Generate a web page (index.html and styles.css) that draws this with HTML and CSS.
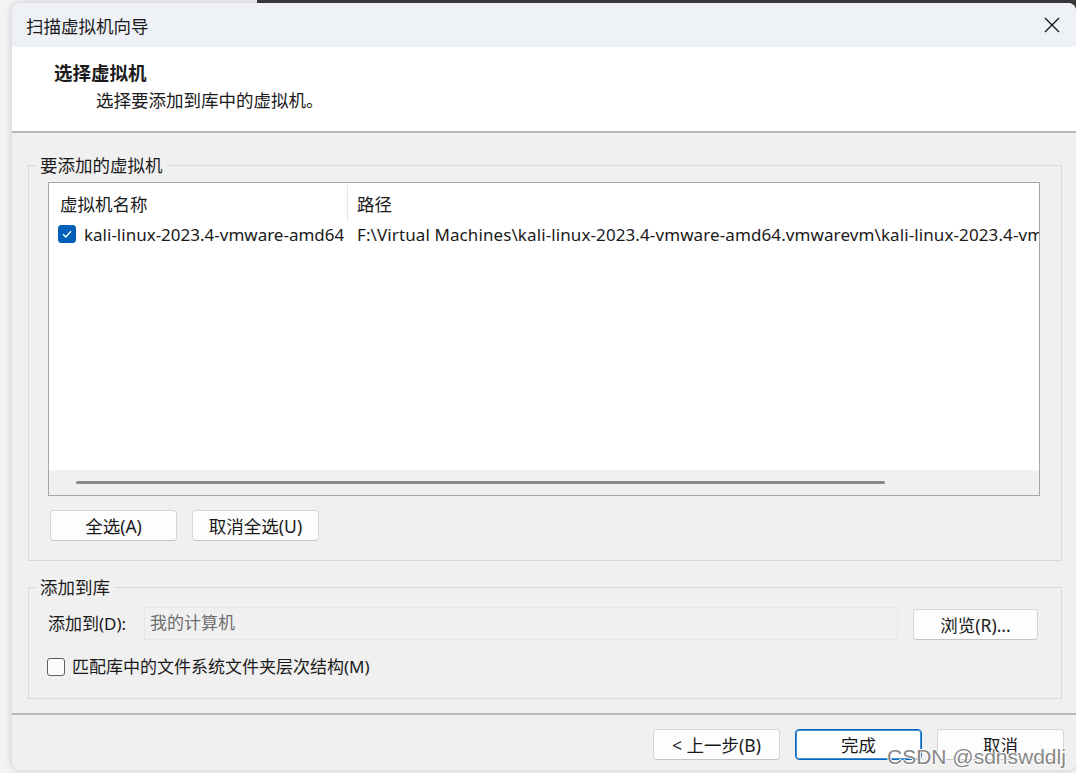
FILE: index.html
```html
<!DOCTYPE html>
<html lang="zh-CN">

<head>
    <meta charset="UTF-8">
    <meta name="viewport" content="width=device-width, initial-scale=1.0">
    <title>扫描虚拟机向导</title>
    <link rel="stylesheet" href="styles.css">
</head>

<body>

    <!-- window edge peeking out behind the dialog -->
    <div class="backdrop"></div>

    <div class="dialog">
        <div class="titlebar">
            <span class="title">扫描虚拟机向导</span>
            <span class="close">
                <svg width="16" height="16" viewBox="0 0 16 16">
                    <path d="M1 1 L15 15 M15 1 L1 15" stroke="#1a1a1a" stroke-width="1.4" fill="none"/>
                </svg>
            </span>
        </div>

        <div class="header">
            <div class="header-title">选择虚拟机</div>
            <div class="header-sub">选择要添加到库中的虚拟机。</div>
        </div>

        <div class="content">
            <fieldset class="group group-vms">
                <legend>要添加的虚拟机</legend>

                <div class="list">
                    <div class="list-head">
                        <div class="col col-name">虚拟机名称</div>
                        <div class="col col-path">路径</div>
                    </div>
                    <div class="list-row">
                        <div class="col col-name">
                            <span class="check checked">
                                <svg width="12" height="12" viewBox="0 0 12 12">
                                    <path d="M2 6.3 L4.8 9 L10 3.2" stroke="#fff" stroke-width="1.4" fill="none"/>
                                </svg>
                            </span>
                            kali-linux-2023.4-vmware-amd64
                        </div>
                        <div class="col col-path">F:\Virtual Machines\kali-linux-2023.4-vmware-amd64.vmwarevm\kali-linux-2023.4-vmware-amd64.vmx</div>
                    </div>
                    <div class="list-fill"></div>
                    <div class="hscroll">
                        <div class="hscroll-thumb"></div>
                    </div>
                </div>

                <div class="btn-row">
                    <button class="btn">全选(A)</button>
                    <button class="btn">取消全选(U)</button>
                </div>
            </fieldset>

            <fieldset class="group group-lib">
                <legend>添加到库</legend>

                <div class="field-row">
                    <label class="field-label">添加到(D):</label>
                    <div class="field-input">我的计算机</div>
                    <button class="btn btn-browse">浏览(R)...</button>
                </div>

                <div class="check-row">
                    <span class="check"></span>
                    匹配库中的文件系统文件夹层次结构(M)
                </div>
            </fieldset>
        </div>

        <div class="footer">
            <button class="btn">&lt; 上一步(B)</button>
            <button class="btn btn-default">完成</button>
            <button class="btn">取消</button>
        </div>
    </div>

    <div class="watermark">CSDN @sdnswddlj</div>

</body>

</html>
```

FILE: styles.css
```css
* {
    margin: 0;
    padding: 0;
    box-sizing: border-box;
}

body {
    font-family: "Noto Sans", "Noto Sans CJK SC", sans-serif;
    font-size: 17px;
    color: #1a1a1a;
    background-color: #f4f4f4;
    width: 1076px;
    height: 773px;
    overflow: hidden;
    position: relative;
}

.backdrop {
    position: absolute;
    top: 0;
    left: 257px;
    right: 0;
    height: 12px;
    background-color: #3c3c3c;
}

.dialog {
    position: relative;
    margin: 3px 0 0 12px;
    width: 1064px;
    height: 767px;
    background-color: #f0f0f0;
    border-radius: 8px;
    overflow: hidden;
    box-shadow: 0 0 10px rgba(0, 0, 0, 0.18);
    display: flex;
    flex-direction: column;
}

/* Title bar */
.titlebar {
    height: 44px;
    background-color: #eef2f7;
    display: flex;
    align-items: center;
    justify-content: space-between;
    padding: 0 14px 0 14px;
}

.title {
    font-size: 17.5px;
}

.close {
    display: flex;
    margin-right: 2px;
}

/* White wizard header */
.header {
    height: 86px;
    background-color: #fff;
    border-bottom: 2px solid #b9b9b9;
    padding: 13px 0 0 42px;
}

.header-title {
    font-size: 18.5px;
    font-weight: bold;
    line-height: 26px;
}

.header-sub {
    font-size: 17.5px;
    line-height: 28px;
    padding-left: 42px;
}

.content {
    flex: 1;
    padding: 21px 14px 0 16px;
}

/* Group boxes */
.group {
    min-width: 0;
    border: 1px solid #dadada;
    padding: 6px 21px 19px 19px;
}

.group legend {
    margin-left: -12px;
    padding: 0 4px;
    line-height: 22px;
    font-size: 17.5px;
}

.group-lib {
    margin-top: 15px;
    padding: 9px 23px 21px 18px;
}

.group-lib legend {
    margin-left: -11px;
}

/* VM list */
.list {
    height: 314px;
    background-color: #fff;
    border: 1px solid #a6a6a6;
    display: flex;
    flex-direction: column;
    overflow: hidden;
    white-space: nowrap;
}

.list-head,
.list-row {
    display: flex;
}

.list-head {
    height: 40px;
    align-items: center;
}

.list-head .col {
    font-size: 17.5px;
}

.col-name {
    width: 299px;
    flex-shrink: 0;
    padding-left: 11px;
    display: flex;
    align-items: center;
}

.list-head .col-name {
    height: 36px;
    border-right: 1px solid #e5e5e5;
}

.col-path {
    padding-left: 9px;
}

.list-row .col-path {
    letter-spacing: 0.1px;
}

.list-row {
    height: 22px;
    align-items: center;
}

.list-row .col-name {
    padding-left: 9px;
}

.list-fill {
    flex: 1;
}

.hscroll {
    height: 25px;
    background-color: #f0f0f0;
    padding: 11px 0 0 27px;
}

.hscroll-thumb {
    width: 809px;
    height: 3px;
    background-color: #8a8a8a;
    border-radius: 2px;
}

/* Checkboxes */
.check {
    width: 18px;
    height: 18px;
    border: 1px solid #606060;
    border-radius: 3px;
    background-color: #fbfbfb;
    display: inline-flex;
    align-items: center;
    justify-content: center;
    margin-right: 8px;
    flex-shrink: 0;
}

.check.checked {
    background-color: #005fb8;
    border-color: #005fb8;
}

/* Buttons */
.btn {
    font-family: inherit;
    font-size: 17.5px;
    color: #1a1a1a;
    width: 127px;
    height: 31px;
    background-color: #fdfdfd;
    border: 1px solid #d5d5d5;
    border-bottom-color: #c4c4c4;
    border-radius: 4px;
}

.btn-row {
    display: flex;
    gap: 15px;
    margin: 14px 0 0 2px;
}

.btn-default {
    background-color: #fff;
    border: 1px solid #0067c0;
    box-shadow: inset 0 0 0 1px #4a8fd4;
}

/* Add-to-library row */
.field-row {
    display: flex;
    align-items: flex-end;
}

.field-label {
    width: 97px;
    padding-left: 1px;
    line-height: 33px;
}

.field-input {
    width: 754px;
    height: 33px;
    border: 1px solid #e6e6e6;
    background-color: #f0f0f0;
    color: #6d6d6d;
    padding-left: 5px;
    line-height: 30px;
}

.btn-browse {
    margin-left: 15px;
    width: 125px;
}

.check-row {
    display: flex;
    align-items: center;
    margin-top: 17px;
    line-height: 20px;
}

.check-row .check {
    margin-right: 7px;
}

/* Footer with wizard buttons */
.footer {
    height: 57px;
    border-top: 2px solid #b9b9b9;
    display: flex;
    justify-content: flex-end;
    gap: 15px;
    padding: 14px 12px 0 0;
}

.watermark {
    position: absolute;
    left: 887px;
    top: 745px;
    font-family: "Liberation Sans", sans-serif;
    font-size: 21px;
    color: #878787;
    text-shadow: 1px 0 #fff, -1px 0 #fff, 0 1px #fff, 0 -1px #fff;
}
```
